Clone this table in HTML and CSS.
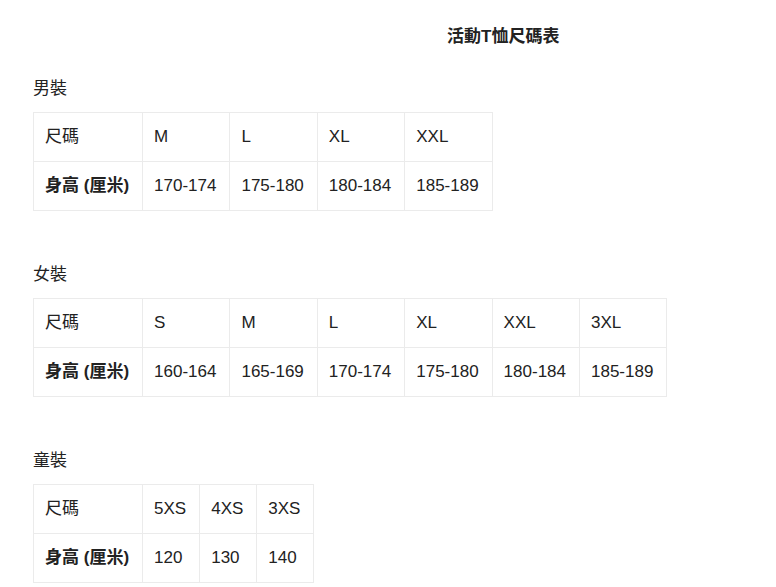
FILE: index.html
```html
<!DOCTYPE html>
<html lang="zh-Hant">
<head>
<meta charset="utf-8">
<title>活動T恤尺碼表</title>
<link rel="stylesheet" href="styles.css">
</head>
<body>
<div class="page">
  <h1 class="title">活動T恤尺碼表</h1>

  <section class="group">
    <h2 class="group-title">男裝</h2>
    <table class="size-table">
      <tr><td>尺碼</td><td>M</td><td>L</td><td>XL</td><td>XXL</td></tr>
      <tr><th>身高 (厘米)</th><td>170-174</td><td>175-180</td><td>180-184</td><td>185-189</td></tr>
    </table>
  </section>

  <section class="group">
    <h2 class="group-title">女裝</h2>
    <table class="size-table">
      <tr><td>尺碼</td><td>S</td><td>M</td><td>L</td><td>XL</td><td>XXL</td><td>3XL</td></tr>
      <tr><th>身高 (厘米)</th><td>160-164</td><td>165-169</td><td>170-174</td><td>175-180</td><td>180-184</td><td>185-189</td></tr>
    </table>
  </section>

  <section class="group">
    <h2 class="group-title">童裝</h2>
    <table class="size-table">
      <tr><td>尺碼</td><td>5XS</td><td>4XS</td><td>3XS</td></tr>
      <tr><th>身高 (厘米)</th><td>120</td><td>130</td><td>140</td></tr>
    </table>
  </section>
</div>
</body>
</html>
```
FILE: styles.css
```css
html, body {
  margin: 0;
  padding: 0;
  background: #ffffff;
}
body {
  font-family: "Liberation Sans", "Noto Sans CJK TC", sans-serif;
  color: #222222;
  font-size: 17px;
}
.page {
  padding: 27px 33px 0 33px;
}
.title {
  margin: 0;
  padding-left: 414px;
  font-size: 17px;
  line-height: 20px;
  font-weight: bold;
  color: #222222;
}
.group {
  margin-top: 28px;
}
.group + .group {
  margin-top: 50px;
}
.group-title {
  margin: 0 0 9px 0;
  font-size: 17px;
  line-height: 28px;
  font-weight: normal;
}
.size-table {
  border-collapse: collapse;
  font-size: 17px;
  line-height: 20px;
}
.size-table td,
.size-table th {
  border: 1px solid #ebebeb;
  padding: 0 13px 0 11px;
  height: 48px;
  text-align: left;
  white-space: nowrap;
}
.size-table th {
  font-weight: bold;
}
```
